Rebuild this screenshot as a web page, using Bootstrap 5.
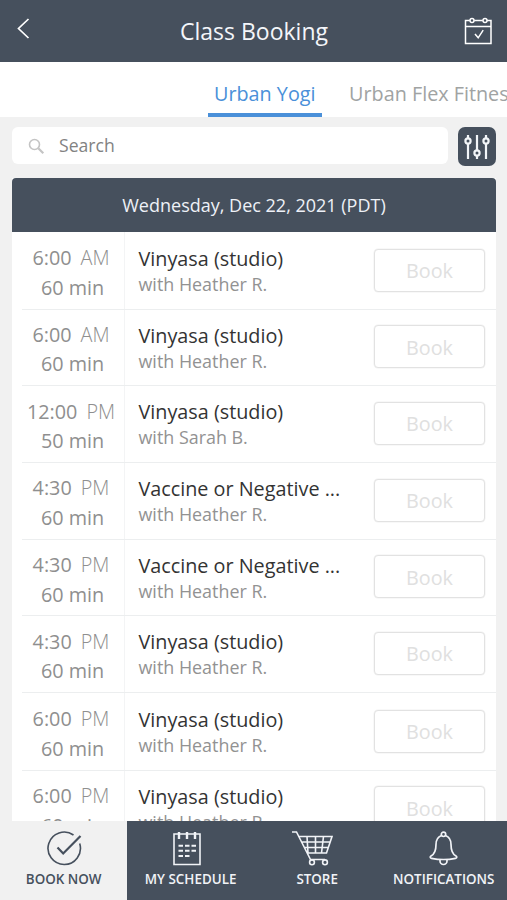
<!DOCTYPE html>
<html lang="en">
<head>
<meta charset="utf-8">
<meta name="viewport" content="width=device-width, initial-scale=1">
<title>Class Booking</title>
<link href="https://cdn.jsdelivr.net/npm/bootstrap@5.3.0/dist/css/bootstrap.min.css" rel="stylesheet">
<style>
  :root { --slate: #46505d; --accent: #4a90d9; --page: #f1f1f1; }
  body { font-family: "Open Sans", "Noto Sans", sans-serif; background: var(--page); height: 900px; }
  svg { display: block; fill: none; stroke: currentColor; }
  .topbar { height: 62px; background: var(--slate); color: #fff; padding: 0 14px 0 17px; }
  .topbar h1 { font-size: 23px; line-height: 32px; color: #f4f6fa; padding-right: 2px; }
  .side { width: 30px; }
  .back { margin-top: -5px; }
  .studios { height: 55px; padding-left: 207.5px; gap: 21px; }
  .studio { font-size: 19.8px; line-height: 28px; padding: 18px 6px 0 6.5px; color: #a0a3a3; border-bottom: 4px solid transparent; white-space: nowrap; }
  .studio.current { color: var(--accent); border-color: var(--accent); }
  .finder { padding: 10px 11px 0 12px; height: 61px; gap: 10px; }
  .field { height: 37px; border-radius: 6px; padding-left: 16px; gap: 14px; color: #c4c4c4; }
  .field input { font-size: 17.6px; color: #777; outline: 0; }
  .field input::placeholder { color: #828282; opacity: 1; }
  .field svg { margin-top: 2px; }
  .filter { width: 38px; height: 39px; border-radius: 7px; background: var(--slate); color: #f2f5f8; }
  .schedule { margin: 0 11px 0 12px; }
  .day { height: 54px; background: var(--slate); color: #eef1f7; font-size: 18px; border-radius: 4px 4px 0 0; padding-top: 1px; }
  .slot { height: 76.7px; }
  .slot:nth-child(7) { height: 77.8px; padding-top: 1px; }
  .slot + .slot::before { content: ""; position: absolute; left: 10px; right: 0; top: 0; height: 1px; background: #eceeef; }
  .when { width: 113px; border-right: 1px solid #f3f4f5; padding-top: 11.3px; color: #8f8f8f; font-size: 19.8px; line-height: 29.5px; }
  .clock { gap: 9px; padding-left: 6px; }
  .half { font-weight: 300; }
  .length { padding-left: 9px; }
  .what { padding: 14px 0 0 13.5px; }
  .what h2 { font-size: 19.8px; line-height: 26px; color: #333; }
  .what p { font-size: 17.9px; line-height: 24px; color: #929292; }
  .book { width: 111px; height: 43px; margin: 16.5px 11px 0 0; font-size: 19.8px; line-height: 28px; color: #e0e0e0; border: 1.5px solid #e2e2e2; border-radius: 4px; background: #fff; padding-top: 2px !important; box-shadow: 0 0 0 .5px #f1f1f1; }
  .tabs { height: 79px; background: var(--slate); color: #f1f3f7; font-size: 13.4px; font-weight: 600; }
  .tab { width: 126.75px; padding-top: 9px; line-height: 18px; gap: 4px; white-space: nowrap; }
  .tab.here { width: 127.5px; background: var(--page); color: var(--slate); }
</style>
<script src="https://cdn.jsdelivr.net/npm/bootstrap@5.3.0/dist/js/bootstrap.bundle.min.js"></script>
</head>
<body class="d-flex flex-column overflow-hidden">
<header class="topbar d-flex align-items-center justify-content-between flex-shrink-0">
  <div class="side"><svg class="back" width="13" height="21" viewBox="0 0 13 21" stroke-width="1.7"><path d="M11.5 1 1.500 10.500l10 9.500"/></svg></div>
  <h1 class="m-0 fw-normal">Class Booking</h1>
  <div class="side"><svg width="30" height="30" viewBox="0 0 30 30" stroke-width="1.5" stroke="#d9dee6"><path d="M6.800 4.500H2.500v23h25.500v-23h-4M11.200 4.500h8.600M2.500 10.500h25.500M12 18l3.200 3.800 5-7.600"/><circle cx="9" cy="4.500" r="2"/><circle cx="22" cy="4.500" r="2"/></svg></div>
</header>
<nav class="studios d-flex bg-white flex-shrink-0 overflow-hidden">
  <div class="studio current">Urban Yogi</div>
  <div class="studio">Urban Flex Fitness</div>
</nav>
<div class="finder d-flex flex-shrink-0">
  <label class="field d-flex align-items-center bg-white flex-grow-1">
    <svg width="17" height="17" viewBox="0 0 17 17" stroke-width="1.6"><circle cx="6.500" cy="6.500" r="5"/><path d="m10.300 10.300 5 5" stroke-width="2.200"/></svg>
    <input class="border-0 p-0 bg-transparent flex-grow-1" type="text" placeholder="Search">
  </label>
  <button class="filter border-0 p-0 d-flex align-items-center justify-content-center" aria-label="Filter">
    <svg width="26" height="26" viewBox="0 0 26 26" stroke-width="2.200"><path d="M4 1v3.500M4 9.500V25M13 1v15.500M13 21.500V25M22 1v3.500M22 9.500V25"/><circle cx="4" cy="7" r="2.600"/><circle cx="13" cy="19" r="2.600"/><circle cx="22" cy="7" r="2.600"/></svg>
  </button>
</div>
<main class="schedule flex-grow-1 overflow-hidden bg-white">
  <div class="day d-flex align-items-center justify-content-center">Wednesday, Dec 22, 2021 (PDT)</div>
  <div id="slots"></div>
</main>
<nav class="tabs d-flex flex-shrink-0">
  <div class="tab here d-flex flex-column align-items-center">
    <svg width="36" height="36" viewBox="0 0 36 36" stroke-width="1.600"><path d="M27.500 5A16.200 16.200 0 1 0 33.700 13.500"/><path d="m11.500 17.500 5.700 6L34.500 6" stroke-width="2.200"/></svg>
    <span>BOOK NOW</span>
  </div>
  <div class="tab d-flex flex-column align-items-center">
    <svg class="me-2" width="30" height="36" viewBox="0 0 30 36" stroke-width="1.600"><path d="M2 4h26v30.500H2z"/><path d="M7 2v7M15 2v7M23 2v7" stroke-width="2.400"/><path d="M6.500 15.700h4.500M13 15.700h4.500M19.500 15.700h4.500M6.500 20.700h4.500M13 20.700h4.500M19.500 20.700h4.500M6.500 26h4.500M13 26h4.500" stroke-width="2"/></svg>
    <span>MY SCHEDULE</span>
  </div>
  <div class="tab d-flex flex-column align-items-center">
    <svg class="me-2" width="42" height="36" viewBox="0 0 42 36" stroke-width="1.600"><path d="M0 2h4.500L18.500 29.500H33M6.500 6.500H40L34.500 23H15.500M9.500 12h28.500M12.500 17.500h23.500M15 6.500l1 16.500M23.500 6.500V23M31.500 6.500 29.500 23"/><circle cx="20" cy="32.300" r="2.400" fill="#46505d"/><circle cx="33" cy="32.300" r="2.400" fill="#46505d"/></svg>
    <span>STORE</span>
  </div>
  <div class="tab d-flex flex-column align-items-center">
    <svg width="32" height="36" viewBox="0 0 32 36" stroke-width="1.700"><path d="M13.500 5.500C9.500 7 8 10.500 8 14.500c0 6-1 9.500-5 11.500-1.200.7-1 2 .5 2.300 7 1.400 17 1.400 24 0 1.500-.3 1.700-1.600.5-2.300-4-2-5-5.500-5-11.500 0-4-1.500-7.500-5.500-9"/><circle cx="15.500" cy="4.300" r="2.200"/><path d="M12 29.500v1.500a3.500 3.500 0 0 0 7 0v-1.500"/></svg>
    <span>NOTIFICATIONS</span>
  </div>
</nav>
<script>
  const slots = [
    ["6:00", "AM", 60, "Vinyasa (studio)", "Heather R."],
    ["6:00", "AM", 60, "Vinyasa (studio)", "Heather R."],
    ["12:00", "PM", 50, "Vinyasa (studio)", "Sarah B."],
    ["4:30", "PM", 60, "Vaccine or Negative ...", "Heather R."],
    ["4:30", "PM", 60, "Vaccine or Negative ...", "Heather R."],
    ["4:30", "PM", 60, "Vinyasa (studio)", "Heather R."],
    ["6:00", "PM", 60, "Vinyasa (studio)", "Heather R."],
    ["6:00", "PM", 60, "Vinyasa (studio)", "Heather R."]
  ];
  document.getElementById("slots").innerHTML = slots.map(([time, half, mins, title, who]) => `
    <div class="slot d-flex position-relative">
      <div class="when flex-shrink-0">
        <div class="clock d-flex justify-content-center"><span>${time}</span><span class="half">${half}</span></div>
        <div class="length text-center">${mins} min</div>
      </div>
      <div class="what flex-grow-1">
        <h2 class="m-0 fw-normal text-nowrap">${title}</h2>
        <p class="m-0">with ${who}</p>
      </div>
      <button class="book p-0 flex-shrink-0" disabled>Book</button>
    </div>`).join("");
</script>
</body>
</html>
